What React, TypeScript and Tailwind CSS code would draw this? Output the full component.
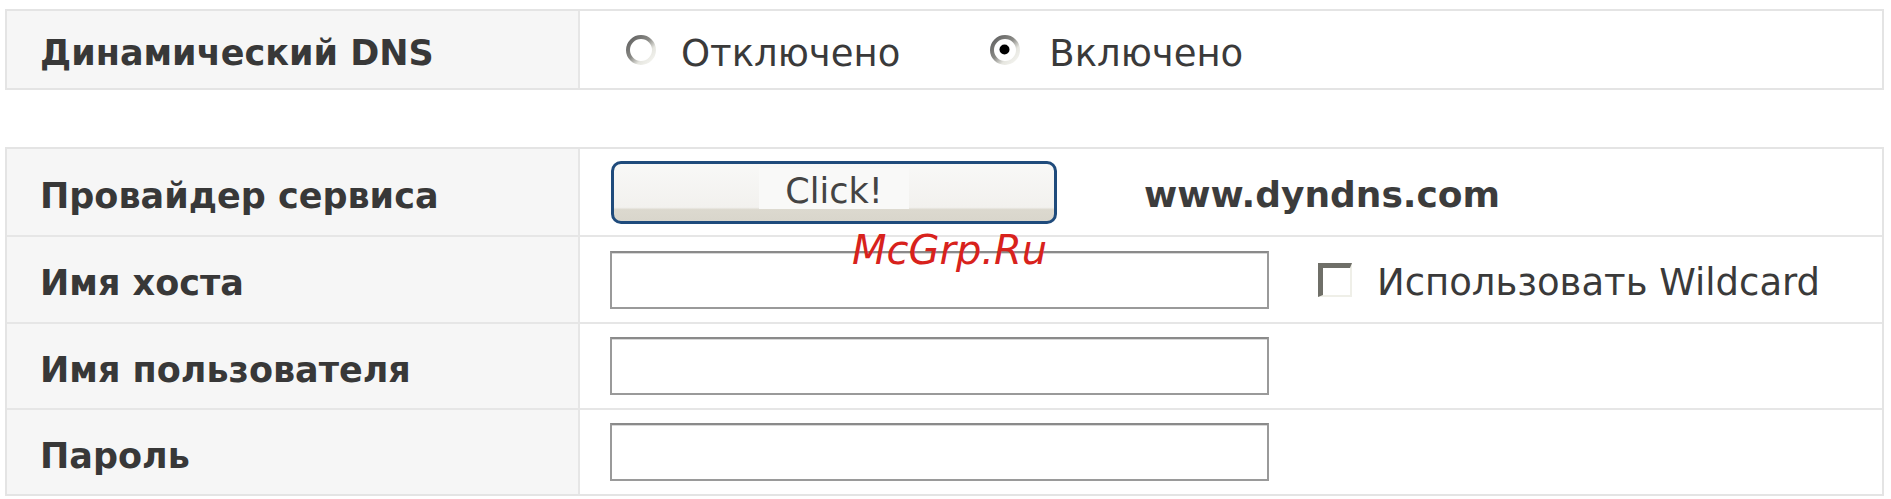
import React from "react";

const font = { fontFamily: '"DejaVu Sans", Verdana, sans-serif' };

function Radio({ checked }: { checked?: boolean }) {
  return (
    <svg width="32" height="32" viewBox="0 0 32 32" className="shrink-0">
      <defs>
        <linearGradient id={checked ? "rg1" : "rg0"} x1="0" y1="0" x2="1" y2="1">
          <stop offset="0%" stopColor="#5e5e5e" />
          <stop offset="45%" stopColor="#8a8a86" />
          <stop offset="70%" stopColor="#e6e6e0" />
          <stop offset="100%" stopColor="#f6f6f2" />
        </linearGradient>
      </defs>
      <circle cx="16" cy="16" r="13" fill="#ffffff" stroke={`url(#${checked ? "rg1" : "rg0"})`} strokeWidth="4" />
      {checked && <circle cx="15.5" cy="15.5" r="5" fill="#000000" />}
    </svg>
  );
}

function Checkbox() {
  return (
    <div className="w-[34px] h-[34px] shrink-0 bg-white border-t-[5px] border-l-[5px] border-r-2 border-b-2 border-t-[#6f6f68] border-l-[#6f6f68] border-r-[#efefe8] border-b-[#efefe8]" />
  );
}

function TextInput() {
  return (
    <div className="w-[659px] h-[58px] bg-white border-2 border-[#9a9a9a] border-t-[#8a8a8a] shadow-[inset_0_1px_0_#d8d8d8]" />
  );
}

function Label({ children }: { children: React.ReactNode }) {
  return (
    <div className="w-[573px] shrink-0 bg-[#f6f6f6] border-r-2 border-[#e6e6e6] flex items-center pl-[33px] pt-[8px] text-[35px] font-bold text-[#383838]">
      {children}
    </div>
  );
}

export default function App() {
  return (
    <div className="relative w-[1891px] h-[499px] bg-white" style={font}>
      <div className="pt-[9px] pl-[5px]">
        {/* Table 1 */}
        <div className="w-[1879px] border-2 border-[#e4e4e4]">
          <div className="flex h-[77px]">
            <Label>Динамический DNS</Label>
            <div className="flex-1 flex items-center pl-[45px] text-[37px] text-[#3a3a3a]">
              <Radio />
              <span className="ml-[24px] pt-[9px]">Отключено</span>
              <span className="ml-[89px] flex items-center">
                <Radio checked />
              </span>
              <span className="ml-[28px] pt-[9px]">Включено</span>
            </div>
          </div>
        </div>

        {/* Table 2 */}
        <div className="mt-[57px] w-[1879px] border-2 border-[#e4e4e4]">
          <div className="flex h-[86px]">
            <Label>Провайдер сервиса</Label>
            <div className="flex-1 flex items-center pl-[31px]">
              <button className="w-[446px] h-[63px] rounded-[10px] border-[3px] border-[#1f4b7c] bg-[linear-gradient(to_bottom,#f8f8f7_0%,#f2f1ee_76%,#dcd9cf_80%,#d9d6cc_100%)] text-[35px] text-[#444444] flex items-start justify-center pt-[4px]">
                <span className="bg-[#f9f9f8] px-[26px] h-[41px] leading-[46px]">Click!</span>
              </button>
              <span className="ml-[87px] pt-[6px] text-[36px] font-bold text-[#3c3c3c]">www.dyndns.com</span>
            </div>
          </div>
          <div className="flex h-[87px] border-t-2 border-[#e6e6e6]">
            <Label>Имя хоста</Label>
            <div className="flex-1 flex items-center pl-[30px]">
              <TextInput />
              <div className="ml-[49px] flex items-center">
                <Checkbox />
              </div>
              <span className="ml-[25px] pt-[6px] text-[37px] text-[#3a3a3a]">Использовать Wildcard</span>
            </div>
          </div>
          <div className="flex h-[86px] border-t-2 border-[#e6e6e6]">
            <Label>Имя пользователя</Label>
            <div className="flex-1 flex items-center pl-[30px]">
              <TextInput />
            </div>
          </div>
          <div className="flex h-[86px] border-t-2 border-[#e6e6e6]">
            <Label>Пароль</Label>
            <div className="flex-1 flex items-center pl-[30px]">
              <TextInput />
            </div>
          </div>
        </div>
      </div>

      {/* Watermark */}
      <div className="absolute left-[852px] top-[230px] text-[40px] italic text-[#d8221c] leading-none" style={font}>
        McGrp.Ru
      </div>
    </div>
  );
}
